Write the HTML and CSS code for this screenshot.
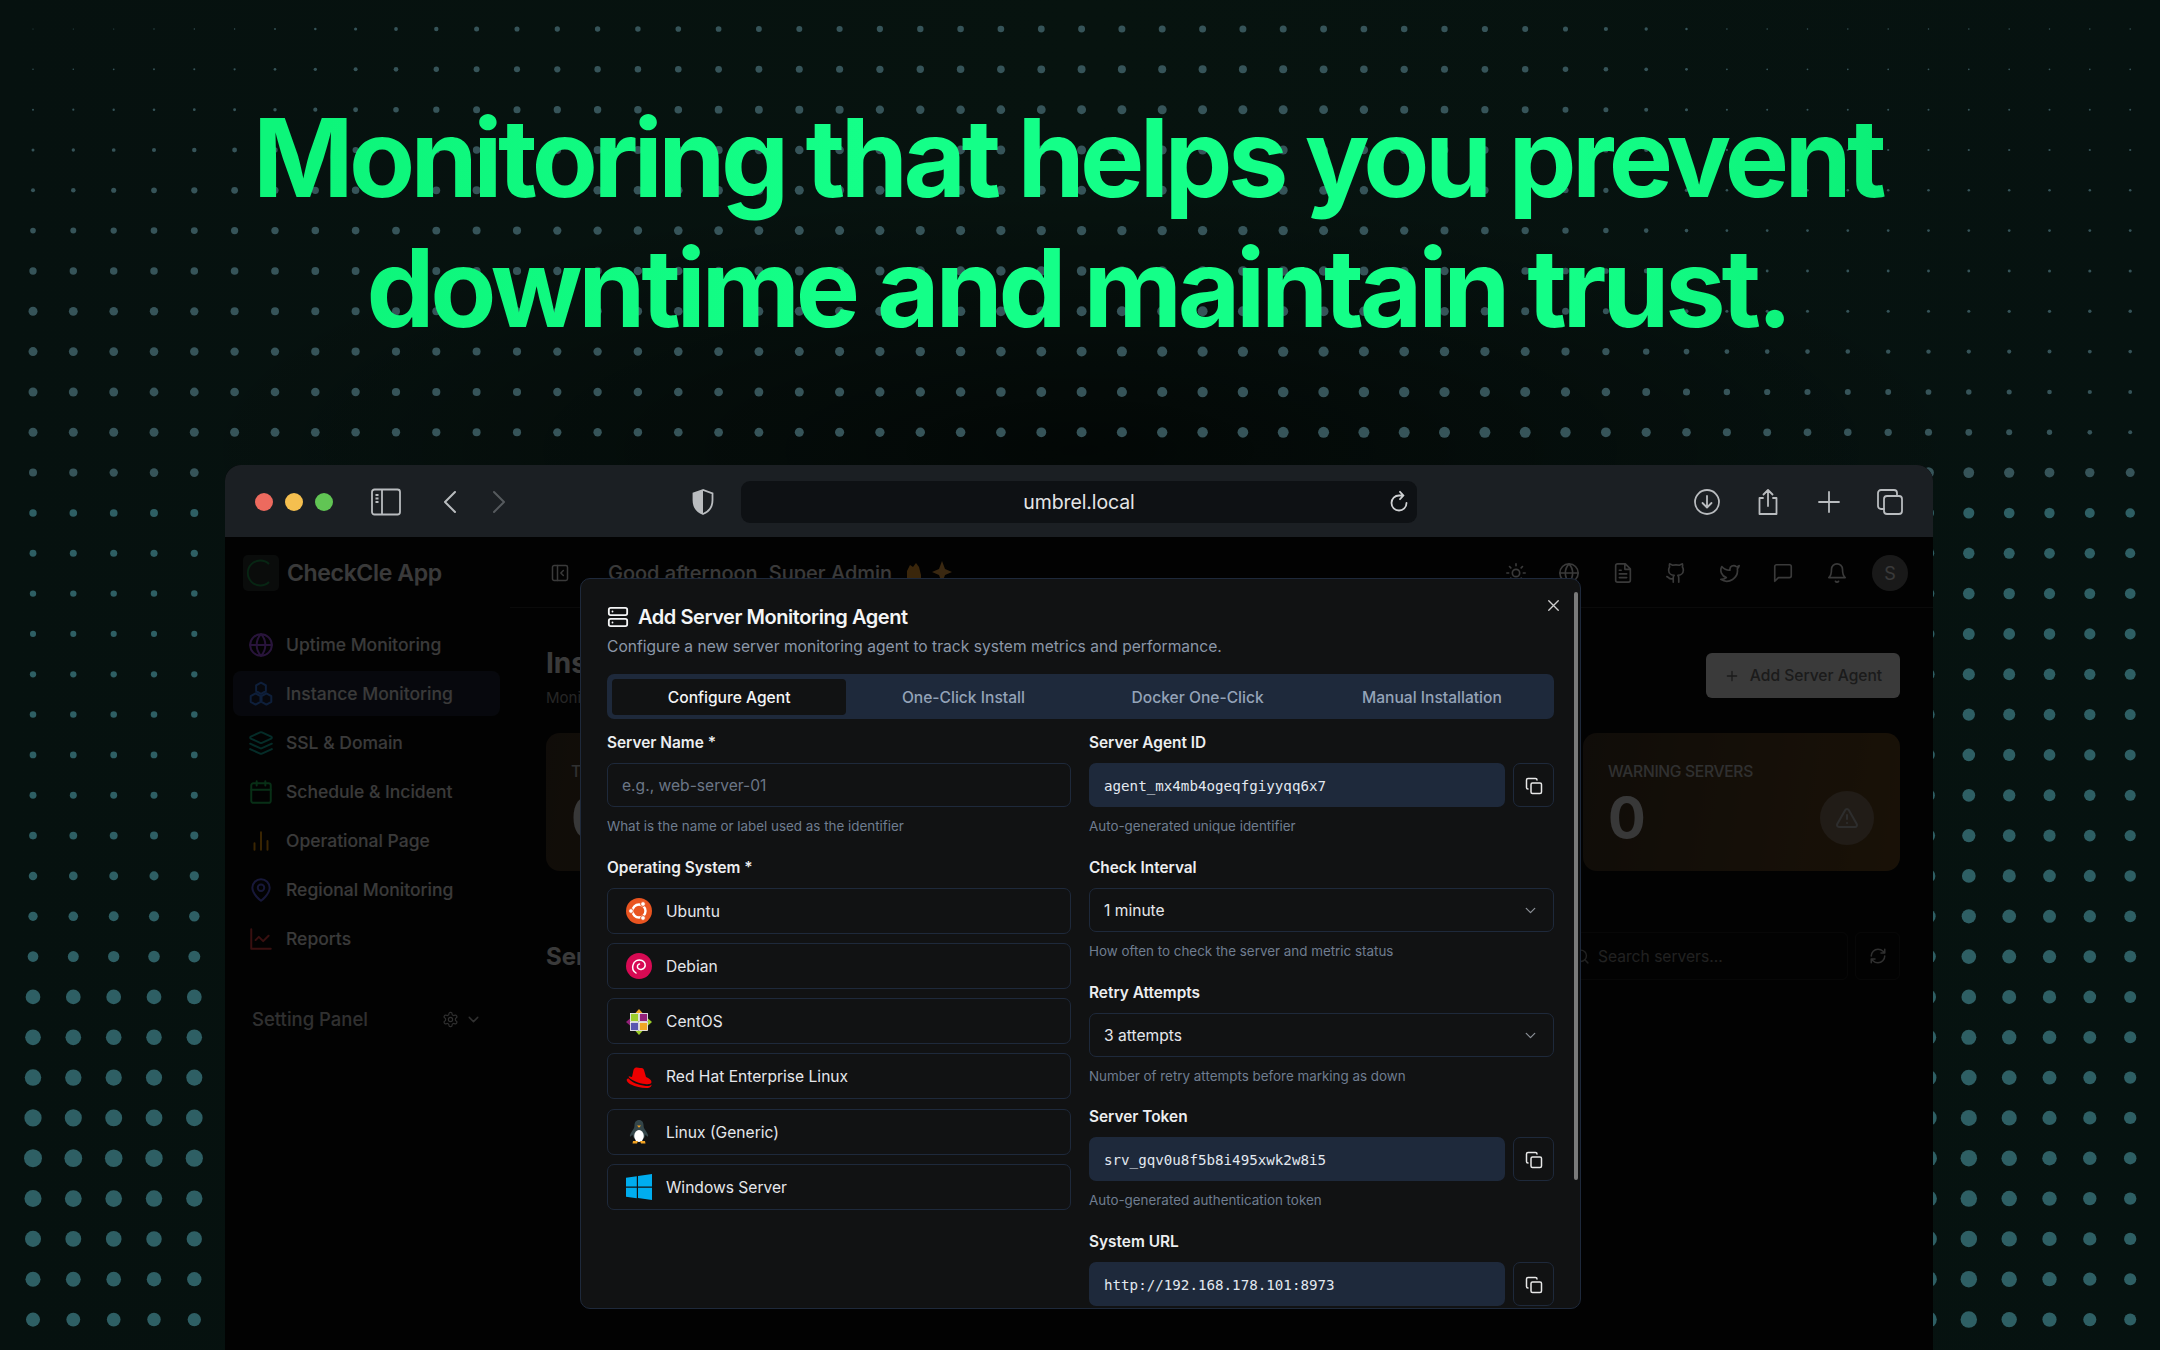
FILE: index.html
```html
<!DOCTYPE html>
<html lang="en">
<head>
<meta charset="utf-8">
<title>CheckCle</title>
<link rel="stylesheet" href="styles.css">
</head>
<body>
<svg class="defs" width="0" height="0" aria-hidden="true">
  <symbol id="i-server" viewBox="0 0 24 24"><rect x="2" y="2" width="20" height="8" rx="2"/><rect x="2" y="14" width="20" height="8" rx="2"/><path d="M6 6h.01M6 18h.01"/></symbol>
  <symbol id="i-copy" viewBox="0 0 24 24"><rect x="8" y="8" width="14" height="14" rx="2"/><path d="M4 16c-1.100 0-2-.9-2-2V4c0-1.100.9-2 2-2h10c1.100 0 2 .9 2 2"/></symbol>
  <symbol id="i-x" viewBox="0 0 24 24"><path d="M18 6 6 18M6 6l12 12"/></symbol>
  <symbol id="i-chev" viewBox="0 0 24 24"><path d="m6 9 6 6 6-6"/></symbol>
  <symbol id="i-globe" viewBox="0 0 24 24"><circle cx="12" cy="12" r="10"/><path d="M12 2a14.500 14.500 0 0 0 0 20 14.500 14.500 0 0 0 0-20M2 12h20"/></symbol>
  <symbol id="i-boxes" viewBox="0 0 24 24"><path d="m12 1.500 4.500 2.600v5.200L12 11.900 7.500 9.300V4.100zM7 11.400l4.500 2.600v5.200L7 21.800l-4.500-2.600V14zM17 11.400l4.500 2.600v5.200L17 21.800l-4.500-2.600V14z"/></symbol>
  <symbol id="i-layers" viewBox="0 0 24 24"><path d="M12.830 2.180a2 2 0 0 0-1.660 0L2.600 6.080a1 1 0 0 0 0 1.830l8.580 3.910a2 2 0 0 0 1.660 0l8.580-3.900a1 1 0 0 0 0-1.830ZM22 17.650l-9.170 4.160a2 2 0 0 1-1.660 0L2 17.650M22 12.650l-9.170 4.160a2 2 0 0 1-1.660 0L2 12.650"/></symbol>
  <symbol id="i-cal" viewBox="0 0 24 24"><path d="M8 2v4M16 2v4M3 10h18"/><rect x="3" y="4" width="18" height="18" rx="2"/></symbol>
  <symbol id="i-bars" viewBox="0 0 24 24"><path d="M12 20V4M18 20v-8M6 20v-6"/></symbol>
  <symbol id="i-pin" viewBox="0 0 24 24"><path d="M20 10c0 6-8 12-8 12s-8-6-8-12a8 8 0 0 1 16 0Z"/><circle cx="12" cy="10" r="3"/></symbol>
  <symbol id="i-chart" viewBox="0 0 24 24"><path d="M3 3v18h18M19 9l-5 5-4-4-3 3"/></symbol>
  <symbol id="i-gear" viewBox="0 0 24 24"><path d="M12.220 2h-.44a2 2 0 0 0-2 2v.18a2 2 0 0 1-1 1.730l-.43.25a2 2 0 0 1-2 0l-.15-.08a2 2 0 0 0-2.730.73l-.22.38a2 2 0 0 0 .73 2.730l.15.1a2 2 0 0 1 1 1.720v.51a2 2 0 0 1-1 1.740l-.15.09a2 2 0 0 0-.73 2.730l.22.38a2 2 0 0 0 2.730.73l.15-.08a2 2 0 0 1 2 0l.43.25a2 2 0 0 1 1 1.730V20a2 2 0 0 0 2 2h.44a2 2 0 0 0 2-2v-.18a2 2 0 0 1 1-1.730l.43-.25a2 2 0 0 1 2 0l.15.08a2 2 0 0 0 2.730-.73l.22-.39a2 2 0 0 0-.73-2.730l-.15-.08a2 2 0 0 1-1-1.740v-.5a2 2 0 0 1 1-1.740l.15-.09a2 2 0 0 0 .73-2.730l-.22-.38a2 2 0 0 0-2.730-.73l-.15.08a2 2 0 0 1-2 0l-.43-.25a2 2 0 0 1-1-1.730V4a2 2 0 0 0-2-2z"/><circle cx="12" cy="12" r="3"/></symbol>
  <symbol id="i-sun" viewBox="0 0 24 24"><circle cx="12" cy="12" r="4"/><path d="M12 2v2M12 20v2M4.930 4.930l1.410 1.410M17.660 17.660l1.410 1.410M2 12h2M20 12h2M6.340 17.660l-1.410 1.410M19.070 4.930l-1.410 1.410"/></symbol>
  <symbol id="i-file" viewBox="0 0 24 24"><path d="M14.500 2H6a2 2 0 0 0-2 2v16a2 2 0 0 0 2 2h12a2 2 0 0 0 2-2V7.500L14.500 2zM14 2v6h6M16 13H8M16 17H8M10 9H8"/></symbol>
  <symbol id="i-github" viewBox="0 0 24 24"><path d="M15 22v-4a4.800 4.800 0 0 0-1-3.500c3 0 6-2 6-5.500.08-1.250-.27-2.480-1-3.500.28-1.150.28-2.350 0-3.500 0 0-1 0-3 1.500-2.640-.5-5.360-.5-8 0C6 2 5 2 5 2c-.3 1.150-.3 2.350 0 3.500A5.403 5.403 0 0 0 4 9c0 3.500 3 5.500 6 5.500-.39.49-.68 1.050-.85 1.650-.17.6-.22 1.230-.15 1.850v4M9 18c-4.510 2-5-2-7-2"/></symbol>
  <symbol id="i-twitter" viewBox="0 0 24 24"><path d="M22 4s-.7 2.100-2 3.400c1.600 10-9.400 17.300-18 11.600 2.200.1 4.400-.6 6-2C3 15.500.5 9.600 3 5c2.200 2.600 5.600 4.100 9 4-.9-4.200 4-6.600 7-3.800 1.100 0 3-1.200 3-1.200z"/></symbol>
  <symbol id="i-msg" viewBox="0 0 24 24"><path d="M21 15a2 2 0 0 1-2 2H7l-4 4V5a2 2 0 0 1 2-2h14a2 2 0 0 1 2 2z"/></symbol>
  <symbol id="i-bell" viewBox="0 0 24 24"><path d="M6 8a6 6 0 0 1 12 0c0 7 3 9 3 9H3s3-2 3-9M10.300 21a1.940 1.940 0 0 0 3.400 0"/></symbol>
  <symbol id="i-collapse" viewBox="0 0 24 24"><rect x="3" y="3" width="18" height="18" rx="2"/><path d="M9 3v18M16 15l-3-3 3-3"/></symbol>
  <symbol id="i-plus" viewBox="0 0 24 24"><path d="M5 12h14M12 5v14"/></symbol>
  <symbol id="i-warn" viewBox="0 0 24 24"><path d="m21.730 18-8-14a2 2 0 0 0-3.480 0l-8 14A2 2 0 0 0 4 21h16a2 2 0 0 0 1.730-3ZM12 9v4M12 17h.01"/></symbol>
  <symbol id="i-refresh" viewBox="0 0 24 24"><path d="M3 12a9 9 0 0 1 9-9 9.750 9.750 0 0 1 6.740 2.740L21 8M21 3v5h-5M21 12a9 9 0 0 1-9 9 9.750 9.750 0 0 1-6.740-2.740L3 16M8 16H3v5"/></symbol>
  <symbol id="i-search" viewBox="0 0 24 24"><circle cx="11" cy="11" r="8"/><path d="m21 21-4.300-4.300"/></symbol>
</svg>

<div class="page">
  <svg id="dots" class="dots" width="2160" height="1350" aria-hidden="true"></svg>

  <h1 class="hero">
    <span class="hero-line hero-line-a">Monitoring that helps you prevent</span>
    <span class="hero-line hero-line-b">downtime and maintain trust.</span>
  </h1>

  <div class="browser">
    <div class="toolbar">
      <div class="lights"><i class="light red"></i><i class="light yellow"></i><i class="light green"></i></div>
      <svg class="tb-sidebar" viewBox="0 0 30 30"><rect x="1" y="2.500" width="28" height="25" rx="2.500"/><path d="M11 2.500v25M4.500 8h3M4.500 11.500h3M4.500 15h3"/></svg>
      <svg class="tb-chev tb-back" viewBox="0 0 14 24"><path d="M12 2 2 12l10 10"/></svg>
      <svg class="tb-chev tb-fwd" viewBox="0 0 14 24"><path d="m2 2 10 10L2 22"/></svg>
      <svg class="tb-shield" viewBox="0 0 22 26"><path class="shield-fill" d="M11 1v24C6 23 1.500 19 1.500 11V4.500z"/><path d="M11 1 1.500 4.500V11c0 8 4.500 12 9.500 14 5-2 9.500-6 9.500-14V4.500z"/></svg>
      <div class="urlbar">
        <span class="url">umbrel.local</span>
        <svg class="tb-reload" viewBox="0 0 24 24"><path d="M19.500 13a7.500 7.500 0 1 1-7.500-7.500h4M13 1.800l3.500 3.700-3.500 3.700"/></svg>
      </div>
      <div class="tb-right">
        <svg class="tb-icon" viewBox="0 0 28 28"><circle cx="14" cy="14" r="12"/><path d="M14 8v11M9.500 15l4.500 4.500 4.500-4.500"/></svg>
        <svg class="tb-icon" viewBox="0 0 28 28"><path d="M9 10H5.500v16h17V10H19M14 18V2M9.500 6.500 14 2l4.500 4.500"/></svg>
        <svg class="tb-icon" viewBox="0 0 28 28"><path d="M14 4v20M4 14h20"/></svg>
        <svg class="tb-icon" viewBox="0 0 28 28"><rect x="8" y="8" width="18" height="18" rx="3"/><path d="M8 21H5a3 3 0 0 1-3-3V5a3 3 0 0 1 3-3h13a3 3 0 0 1 3 3v3"/></svg>
      </div>
    </div>

    <div class="viewport">
      <div class="app">
        <aside class="sidebar">
          <div class="brand">
            <div class="brand-logo"><svg viewBox="0 0 36 36"><path d="M26 9a12.500 12.500 0 1 0 0 18"/></svg></div>
            <span class="brand-name">CheckCle App</span>
          </div>
          <nav class="nav">
            <a class="nav-item"><svg class="ic nav-ic c-purple"><use href="#i-globe"/></svg>Uptime Monitoring</a>
            <a class="nav-item is-active"><svg class="ic nav-ic c-blue"><use href="#i-boxes"/></svg>Instance Monitoring</a>
            <a class="nav-item"><svg class="ic nav-ic c-teal"><use href="#i-layers"/></svg>SSL &amp; Domain</a>
            <a class="nav-item"><svg class="ic nav-ic c-green"><use href="#i-cal"/></svg>Schedule &amp; Incident</a>
            <a class="nav-item"><svg class="ic nav-ic c-amber"><use href="#i-bars"/></svg>Operational Page</a>
            <a class="nav-item"><svg class="ic nav-ic c-indigo"><use href="#i-pin"/></svg>Regional Monitoring</a>
            <a class="nav-item"><svg class="ic nav-ic c-red"><use href="#i-chart"/></svg>Reports</a>
          </nav>
          <div class="settings">
            <span class="settings-label">Setting Panel</span>
            <svg class="ic settings-gear"><use href="#i-gear"/></svg>
            <svg class="ic settings-chev"><use href="#i-chev"/></svg>
          </div>
        </aside>
        <main class="main">
          <header class="topbar">
            <svg class="ic topbar-collapse"><use href="#i-collapse"/></svg>
            <span class="greeting">Good afternoon, Super Admin</span>
            <svg class="emoji" viewBox="0 0 50 24"><path class="emoji-hand" d="M3 24V10l3-6 3 2 3-4 3 4 2 8v10z"/><path class="emoji-spark" d="M38 0l3 8 7 3-7 3-3 8-3-8-7-3 7-3z"/></svg>
            <div class="topbar-icons">
              <span class="tb-btn"><svg class="ic"><use href="#i-sun"/></svg></span>
              <span class="tb-btn"><svg class="ic"><use href="#i-globe"/></svg></span>
              <span class="tb-btn"><svg class="ic"><use href="#i-file"/></svg></span>
              <span class="tb-btn"><svg class="ic"><use href="#i-github"/></svg></span>
              <span class="tb-btn"><svg class="ic"><use href="#i-twitter"/></svg></span>
              <span class="tb-btn"><svg class="ic"><use href="#i-msg"/></svg></span>
              <span class="tb-btn"><svg class="ic"><use href="#i-bell"/></svg></span>
              <span class="avatar">S</span>
            </div>
          </header>
          <div class="content">
            <div class="page-head">
              <div>
                <h2 class="page-title">Instance Monitoring</h2>
                <p class="page-sub">Monitor your servers</p>
              </div>
              <button class="add-btn"><svg class="ic add-ic"><use href="#i-plus"/></svg>Add Server Agent</button>
            </div>
            <div class="cards">
              <div class="card"><div class="card-label">TOTAL SERVERS</div><div class="card-row"><span class="card-num">0</span></div></div>
              <div class="card"></div>
              <div class="card"></div>
              <div class="card"><div class="card-label">WARNING SERVERS</div><div class="card-row"><span class="card-num">0</span><span class="card-badge"><svg class="ic"><use href="#i-warn"/></svg></span></div></div>
            </div>
            <div class="section-head">
              <h3 class="section-title">Servers</h3>
              <div class="search"><svg class="ic search-ic"><use href="#i-search"/></svg><span>Search servers...</span></div>
              <span class="refresh"><svg class="ic"><use href="#i-refresh"/></svg></span>
            </div>
          </div>
        </main>
      </div>
      <div class="scrim"></div>

      <section class="modal">
        <div class="scrollbar"></div>
        <svg class="ic modal-close"><use href="#i-x"/></svg>
        <h2 class="modal-title"><svg class="ic modal-title-ic"><use href="#i-server"/></svg>Add Server Monitoring Agent</h2>
        <p class="modal-desc">Configure a new server monitoring agent to track system metrics and performance.</p>
        <div class="tabs">
          <span class="tab is-active">Configure Agent</span>
          <span class="tab">One-Click Install</span>
          <span class="tab">Docker One-Click</span>
          <span class="tab">Manual Installation</span>
        </div>
        <div class="form">
          <div class="col">
            <div class="field">
              <label class="label">Server Name *</label>
              <div class="control"><span class="placeholder">e.g., web-server-01</span></div>
              <p class="help">What is the name or label used as the identifier</p>
            </div>
            <div class="field">
              <label class="label">Operating System *</label>
              <div class="os-list">
                <div class="os"><span class="os-ic"><svg viewBox="0 0 26 26"><circle cx="13" cy="13" r="13" fill="#e95420"/><circle cx="13" cy="13" r="6.500" fill="none" stroke="#fff" stroke-width="2.400"/><circle cx="5" cy="13" r="2.400" fill="#fff" stroke="#e95420" stroke-width="1"/><circle cx="17" cy="6" r="2.400" fill="#fff" stroke="#e95420" stroke-width="1"/><circle cx="17" cy="20" r="2.400" fill="#fff" stroke="#e95420" stroke-width="1"/></svg></span>Ubuntu</div>
                <div class="os"><span class="os-ic"><svg viewBox="0 0 26 26"><circle cx="13" cy="13" r="13" fill="#d70a53"/><path d="M10 20c-3-2-4-5-3-8 1-4 5-6 9-4.500 3 1.200 4 4.500 2.500 7-1.500 2.300-5 2.500-6.500.8-1.200-1.500-.5-4 1.500-4.300" fill="none" stroke="#fff" stroke-width="1.500" stroke-linecap="round"/></svg></span>Debian</div>
                <div class="os"><span class="os-ic"><svg viewBox="0 0 26 26"><path d="M13 0l3.500 4H9.500z" fill="#efa724"/><path d="M26 13l-4 3.500v-7z" fill="#9ccd2a"/><path d="M13 26l-3.500-4h7z" fill="#9ccd2a"/><path d="M0 13l4-3.500v7z" fill="#932279"/><rect x="4.500" y="4.500" width="8" height="8" fill="#9ccd2a" stroke="#fff" stroke-width=".8"/><rect x="13.500" y="4.500" width="8" height="8" fill="#932279" stroke="#fff" stroke-width=".8"/><rect x="13.500" y="13.500" width="8" height="8" fill="#efa724" stroke="#fff" stroke-width=".8"/><rect x="4.500" y="13.500" width="8" height="8" fill="#5a58b0" stroke="#fff" stroke-width=".8"/></svg></span>CentOS</div>
                <div class="os"><span class="os-ic"><svg viewBox="0 0 26 26"><path d="M9 4c2-1 4 .3 5.500 0 2-.4 3 .3 3.500 2l2 7c3 1 5.500 3 5.500 5 0 2-3 2.500-6.500 2C13 19.500 5 16 3 13.500c-.5-.6-.5-1 0-1.200L6 13l1.500-7C7.800 5 8.200 4.400 9 4z" fill="#e00"/><path d="M1 15c-1 1.500.8 4 4 5.500 5 2.500 12 4 17 3.500 2.500-.3 3.700-1.800 3.500-3.500-1 1.500-4 1.800-7 1.300C12 21 5 18 3 14.800 2.200 14.300 1.500 14.400 1 15z" fill="#e00"/></svg></span>Red Hat Enterprise Linux</div>
                <div class="os"><span class="os-ic"><svg viewBox="0 0 26 26"><path d="M13 1c3 0 4.500 2.500 4.500 5 0 3 1 4 3 7 1.300 2 2 4 1.500 4.500-.6.500-1.800-1-2.500-2-.5 3-2 5-6.500 5s-6-2-6.500-5c-.7 1-1.900 2.500-2.500 2C3.500 17 4.200 15 5.500 13c2-3 3-4 3-7 0-2.500 1.500-5 4.500-5z" fill="#34464a"/><ellipse cx="13" cy="17" rx="4.800" ry="6" fill="#fff"/><path d="M11 6.500h4l-2 2.300z" fill="#f0a020"/><path d="M7 22h5l-1 2.500H6.500zM14 22h5l.5 2.500H15z" fill="#f0a020"/></svg></span>Linux (Generic)</div>
                <div class="os"><span class="os-ic"><svg viewBox="0 0 26 26"><path d="M0 3.800 10.800 2.200v10.300H0zM12 2l14-2v12.500H12zM0 13.800h10.800v10.400L0 22.700zM12 13.800h14V26l-14-2z" fill="#00adef"/></svg></span>Windows Server</div>
              </div>
            </div>
          </div>
          <div class="col">
            <div class="field">
              <label class="label">Server Agent ID</label>
              <div class="copy-row"><div class="readonly">agent_mx4mb4ogeqfgiyyqq6x7</div><span class="copy"><svg class="ic"><use href="#i-copy"/></svg></span></div>
              <p class="help">Auto-generated unique identifier</p>
            </div>
            <div class="field">
              <label class="label">Check Interval</label>
              <div class="control select"><span>1 minute</span><svg class="ic select-chev"><use href="#i-chev"/></svg></div>
              <p class="help">How often to check the server and metric status</p>
            </div>
            <div class="field">
              <label class="label">Retry Attempts</label>
              <div class="control select"><span>3 attempts</span><svg class="ic select-chev"><use href="#i-chev"/></svg></div>
              <p class="help">Number of retry attempts before marking as down</p>
            </div>
            <div class="field">
              <label class="label">Server Token</label>
              <div class="copy-row"><div class="readonly">srv_gqv0u8f5b8i495xwk2w8i5</div><span class="copy"><svg class="ic"><use href="#i-copy"/></svg></span></div>
              <p class="help">Auto-generated authentication token</p>
            </div>
            <div class="field">
              <label class="label">System URL</label>
              <div class="copy-row"><div class="readonly">http://192.168.178.101:8973</div><span class="copy"><svg class="ic"><use href="#i-copy"/></svg></span></div>
            </div>
          </div>
        </div>
      </section>
    </div>
  </div>
</div>
<script src="dots.js"></script>
</body>
</html>
```
FILE: styles.css
```css
* { box-sizing: border-box; }
html, body { margin: 0; padding: 0; }
body { background: #07120f; font-family: Inter, "Noto Sans", sans-serif; color: #e5e7eb; }
h1, h2, h3, p { margin: 0; }
.defs { position: absolute; }

.ic { width: 24px; height: 24px; fill: none; stroke: currentColor; stroke-width: 2; stroke-linecap: round; stroke-linejoin: round; flex: none; }

.page {
  position: relative; width: 2160px; height: 1350px; overflow: hidden;
  display: flex; flex-direction: column; align-items: center;
  background:
    radial-gradient(ellipse 900px 260px at 1080px 450px, rgba(0,0,0,.62), rgba(0,0,0,0)),
    linear-gradient(90deg, #06110f, #07130f 50%, #061210);
}
.dots { position: absolute; left: 0; top: 0; }

.hero {
  position: relative; width: 100%; padding-top: 93px; text-align: center;
  font-size: 108px; line-height: 130px; font-weight: 700;
}
.hero-line {
  display: block;
  color: transparent;
  background: linear-gradient(90deg, #0df57a 15%, #14ff88 40%, #14ff88 72%, #0bee76 88%);
  -webkit-background-clip: text; background-clip: text;
}
.hero-line-a { padding-right: 25px; letter-spacing: -4.6px; }
.hero-line-b { padding-right: 5px; letter-spacing: -4.3px; }

.browser {
  position: relative; width: 1708px; flex: 1; margin-top: 112px; margin-left: -2px;
  display: flex; flex-direction: column; overflow: hidden;
  border-radius: 16px 16px 0 0; background: #000;
}

.toolbar { height: 72px; flex: none; background: #1b1f23; display: flex; align-items: center; padding: 2px 0 0 30px; color: #b9bcbf; }
.lights { display: flex; gap: 12px; }
.light { width: 18px; height: 18px; border-radius: 50%; }
.light.red { background: #ed6a5e; }
.light.yellow { background: #f5bf4f; }
.light.green { background: #61c554; }
.tb-sidebar { width: 30px; height: 30px; margin-left: 38px; fill: none; stroke: currentColor; stroke-width: 1.800; }
.tb-chev { width: 14px; height: 24px; fill: none; stroke: currentColor; stroke-width: 2; stroke-linecap: round; stroke-linejoin: round; }
.tb-back { margin-left: 42px; }
.tb-fwd { margin-left: 35px; color: #565a5e; }
.tb-shield { width: 22px; height: 26px; margin-left: 186px; fill: none; stroke: currentColor; stroke-width: 1.800; }
.shield-fill { fill: currentColor; stroke: none; }
.urlbar { width: 676px; height: 42px; margin-left: 27px; background: #0e1114; border-radius: 9px; position: relative; display: flex; align-items: center; justify-content: center; }
.url { font-size: 19.500px; color: #e4e5e6; letter-spacing: -.1px; }
.tb-reload { position: absolute; right: 6px; top: 9px; width: 24px; height: 24px; fill: none; stroke: #cfd1d3; stroke-width: 1.800; stroke-linecap: round; stroke-linejoin: round; }
.tb-right { display: flex; gap: 33px; margin-left: 276px; }
.tb-icon { width: 28px; height: 28px; fill: none; stroke: currentColor; stroke-width: 1.800; stroke-linecap: round; stroke-linejoin: round; }

.viewport { position: relative; flex: 1; background: #0a0a0a; overflow: hidden; }
.app { display: flex; height: 100%; }
.scrim { position: absolute; inset: 0; background: rgba(0,0,0,.76); }

.sidebar { width: 285px; flex: none; padding: 18px 10px 0 8px; }
.brand { display: flex; align-items: center; gap: 8px; padding-left: 10px; height: 36px; }
.brand-logo { width: 36px; height: 36px; border-radius: 5px; background: #2c3230; }
.brand-logo svg { width: 36px; height: 36px; fill: none; stroke: #1f9f52; stroke-width: 1.800; }
.brand-name { font-size: 23px; font-weight: 600; color: #f2f2f2; letter-spacing: -.35px; }
.nav { margin-top: 31px; display: flex; flex-direction: column; gap: 4px; }
.nav-item { height: 45px; display: flex; align-items: center; gap: 12px; padding-left: 15px; border-radius: 8px; font-size: 17.500px; font-weight: 500; color: #f0f0f0; }
.nav-item.is-active { background: #1e2536; }
.nav-ic { width: 26px; height: 26px; stroke-width: 1.800; }
.c-purple { color: #a855f7; } .c-blue { color: #3b82f6; } .c-teal { color: #14b8a6; } .c-green { color: #22c55e; }
.c-amber { color: #f59e0b; } .c-indigo { color: #6366f1; } .c-red { color: #ef4444; }
.settings { margin-top: 46px; padding-left: 19px; padding-right: 18px; height: 24px; display: flex; align-items: center; color: #c8c8c8; }
.settings-label { flex: 1; font-size: 18.500px; font-weight: 500; }
.settings-gear { width: 17px; height: 17px; stroke-width: 1.600; }
.settings-chev { width: 17px; height: 17px; margin-left: 6px; }

.main { flex: 1; min-width: 0; }
.topbar { height: 71px; display: flex; align-items: center; padding: 2px 25px 0 40px; border-bottom: 1px solid #2a2a2a; color: #f0f0f0; }
.topbar-collapse { width: 20px; height: 20px; stroke-width: 1.800; }
.greeting { margin-left: 38px; font-size: 20px; font-weight: 500; }
.emoji { width: 50px; height: 24px; margin-left: 12px; }
.emoji-hand { fill: #f0a030; }
.emoji-spark { fill: #f0a848; }
.topbar-icons { margin-left: auto; display: flex; align-items: center; gap: 17.500px; }
.tb-btn { width: 36px; height: 36px; display: flex; align-items: center; justify-content: center; }
.tb-btn .ic { width: 22px; height: 22px; stroke-width: 1.800; }
.avatar { width: 36px; height: 36px; border-radius: 50%; background: #6a6a6a; display: flex; align-items: center; justify-content: center; font-size: 18px; color: #f0f0f0; }

.content { padding: 37px 33px 0 36px; }
.page-head { display: flex; justify-content: space-between; align-items: flex-start; height: 88px; }
.page-title { font-size: 28px; line-height: 36px; font-weight: 700; color: #f0f0f0; white-space: nowrap; }
.page-sub { font-size: 15px; margin-top: 6px; line-height: 22px; color: #9c9c9c; }
.add-btn { margin-top: 8px; width: 194px; height: 45px; border: 0; border-radius: 6px; background: #f0f0f0; color: #707070; font: 500 15.600px Inter, sans-serif; display: flex; align-items: center; justify-content: center; gap: 10px; }
.add-ic { width: 16px; height: 16px; }
.cards { display: grid; grid-template-columns: repeat(4, 1fr); gap: 28.670px; }
.card { height: 138px; border-radius: 14px; padding: 29px 25px 0; background: linear-gradient(100deg, #443526, #6a4a20); color: #c8c8c8; }
.card-label { font-size: 15.600px; line-height: 20px; font-weight: 500; letter-spacing: -.3px; white-space: nowrap; }
.card-row { display: flex; justify-content: space-between; align-items: center; margin-top: 6px; }
.card-num { font-size: 56px; line-height: 60px; font-weight: 700; color: #e8e8e8; }
.card-badge { width: 54px; height: 54px; border-radius: 50%; background: #8a7560; display: flex; align-items: center; justify-content: center; margin-right: 1px; color: #bbb; }
.section-head { margin-top: 61px; display: flex; align-items: center; }
.section-title { font-size: 24px; font-weight: 700; color: #f0f0f0; }
.search { margin-left: auto; width: 278px; height: 48px; display: flex; align-items: center; gap: 8px; padding-left: 2px; font-size: 15.600px; color: #8a8a8a; border: 1px solid #202020; border-radius: 6px; }
.search-ic { width: 17px; height: 17px; }
.refresh { width: 45px; height: 48px; margin-left: 7px; display: flex; align-items: center; justify-content: center; border: 1px solid #202020; border-radius: 6px; color: #c8c8c8; }
.refresh .ic { width: 18px; height: 18px; }

.modal {
  position: absolute; left: 355px; top: 41px; width: 1001px; height: 731px; overflow: hidden;
  padding: 25px 26px 0 26px; background: #111213; border: 1px solid #1e293b; border-radius: 10px;
}
.scrollbar { position: absolute; right: 2px; top: 13px; width: 4px; height: 588px; background: #7a7a7a; border-radius: 2px; }
.modal-close { position: absolute; right: 17px; top: 17px; width: 19px; height: 19px; color: #cfcfcf; stroke-width: 1.700; }
.modal-title { display: flex; align-items: center; gap: 9px; font-size: 20px; line-height: 26px; font-weight: 600; letter-spacing: -.45px; color: #f4f5f6; }
.modal-title-ic { width: 22px; height: 22px; }
.modal-desc { margin-top: 7px; font-size: 15.600px; line-height: 20px; color: #8b97a8; }
.tabs { margin-top: 17px; height: 45px; padding: 4.500px 5px; border-radius: 7px; background: #1e293b; display: grid; grid-template-columns: repeat(4, 1fr); }
.tab { display: flex; align-items: center; justify-content: center; padding-top: 1px; font-size: 15.600px; font-weight: 500; color: #94a3b8; border-radius: 4px; }
.tab.is-active { background: #111213; color: #f4f5f6; }
.form { margin-top: 13px; display: grid; grid-template-columns: 464px 465px; gap: 18px; }
.field { margin-bottom: 21.800px; }
.label { display: block; padding-top: 1px; font-size: 15.400px; line-height: 20px; height: 21px; font-weight: 600; color: #eceef0; margin-bottom: 10px; }
.control { height: 44px; border: 1px solid #1e293b; border-radius: 7px; display: flex; align-items: center; padding: 1px 14px 0; font-size: 15.600px; color: #e5e7eb; }
.placeholder { color: #6b7686; }
.select { justify-content: space-between; padding-right: 14px; }
.select-chev { width: 17px; height: 17px; color: #8a8f96; stroke-width: 1.800; }
.help { margin-top: 10px; font-size: 13.400px; line-height: 18px; color: #6f7d90; }
.os-list { display: flex; flex-direction: column; gap: 9.200px; }
.os { height: 46px; border: 1px solid #1e293b; border-radius: 7px; display: flex; align-items: center; gap: 14px; padding: 1px 0 0 18px; font-size: 15.600px; color: #e5e7eb; }
.os-ic { width: 26px; height: 26px; }
.os-ic svg { width: 26px; height: 26px; display: block; }
.copy-row { display: flex; gap: 8px; }
.readonly { width: 416px; height: 44px; border-radius: 7px; background: #1e293b; display: flex; align-items: center; padding: 1px 0 0 15px; font-family: "DejaVu Sans Mono", monospace; font-size: 14.200px; color: #e2e8f0; }
.copy { width: 41px; height: 44px; border: 1px solid #1e293b; border-radius: 7px; display: flex; align-items: center; justify-content: center; padding-top: 1px; color: #e8e8e8; }
.copy .ic { width: 18px; height: 18px; }
```
FILE: dots.js
```js
(function () {
  var svg = document.getElementById('dots');
  var xs = [33, 250, 475, 800, 1100, 1300, 1524, 1730, 1950, 2129];
  var rows = [
    [29,   [1, 1.5, 5, 6, 7, 7, 6, 1.5, 1.5, 1.5]],
    [110,  [2, 3, 7, 8, 9, 9, 7, 2, 2, 2]],
    [190,  [4, 7, 8, 9, 9, 9, 7, 2.5, 2.5, 2.5]],
    [311,  [9, 8, 8, 9, 10, 10, 8, 3, 3, 3.5]],
    [432,  [9, 9, 8, 9, 10, 11, 11, 8, 7, 4]],
    [473,  [8, 9, 9, 9, 10, 11, 11, 10, 11, 9]],
    [620,  [6, 6, 6, 9, 10, 11, 11, 11, 12, 11]],
    [800,  [7, 7, 7, 9, 10, 11, 11, 11, 13, 11]],
    [950,  [10, 12, 12, 12, 12, 12, 12, 12, 15, 12]],
    [1000, [15, 15, 15, 15, 15, 15, 15, 15, 15, 12]],
    [1160, [18, 17, 16, 16, 16, 16, 16, 16, 17, 12.5]],
    [1322, [14, 13, 13, 13, 13, 13, 13, 13, 17, 12]]
  ];
  function seg(list, v) {
    var i = 0;
    while (i < list.length - 2 && v > list[i + 1]) i++;
    var t = (v - list[i]) / (list[i + 1] - list[i]);
    return [i, Math.max(0, Math.min(1, t))];
  }
  var ys = rows.map(function (r) { return r[0]; });
  function diam(x, y) {
    var a = seg(xs, x), b = seg(ys, y);
    var r0 = rows[b[0]][1], r1 = rows[b[0] + 1][1];
    var top = r0[a[0]] + (r0[a[0] + 1] - r0[a[0]]) * a[1];
    var bot = r1[a[0]] + (r1[a[0] + 1] - r1[a[0]]) * a[1];
    return top + (bot - top) * b[1];
  }
  var out = '';
  for (var row = 0; row < 34; row++) {
    for (var col = 0; col < 54; col++) {
      var x = 33 + col * 40.33, y = 29 + row * 40.33;
      var fill = y < 480 ? '#365459' : '#2e5f64';
      out += '<circle cx="' + x.toFixed(1) + '" cy="' + y.toFixed(1) + '" r="' + (diam(x, y) / 2).toFixed(2) + '" fill="' + fill + '"/>';
    }
  }
  svg.innerHTML = out;
})();
```
